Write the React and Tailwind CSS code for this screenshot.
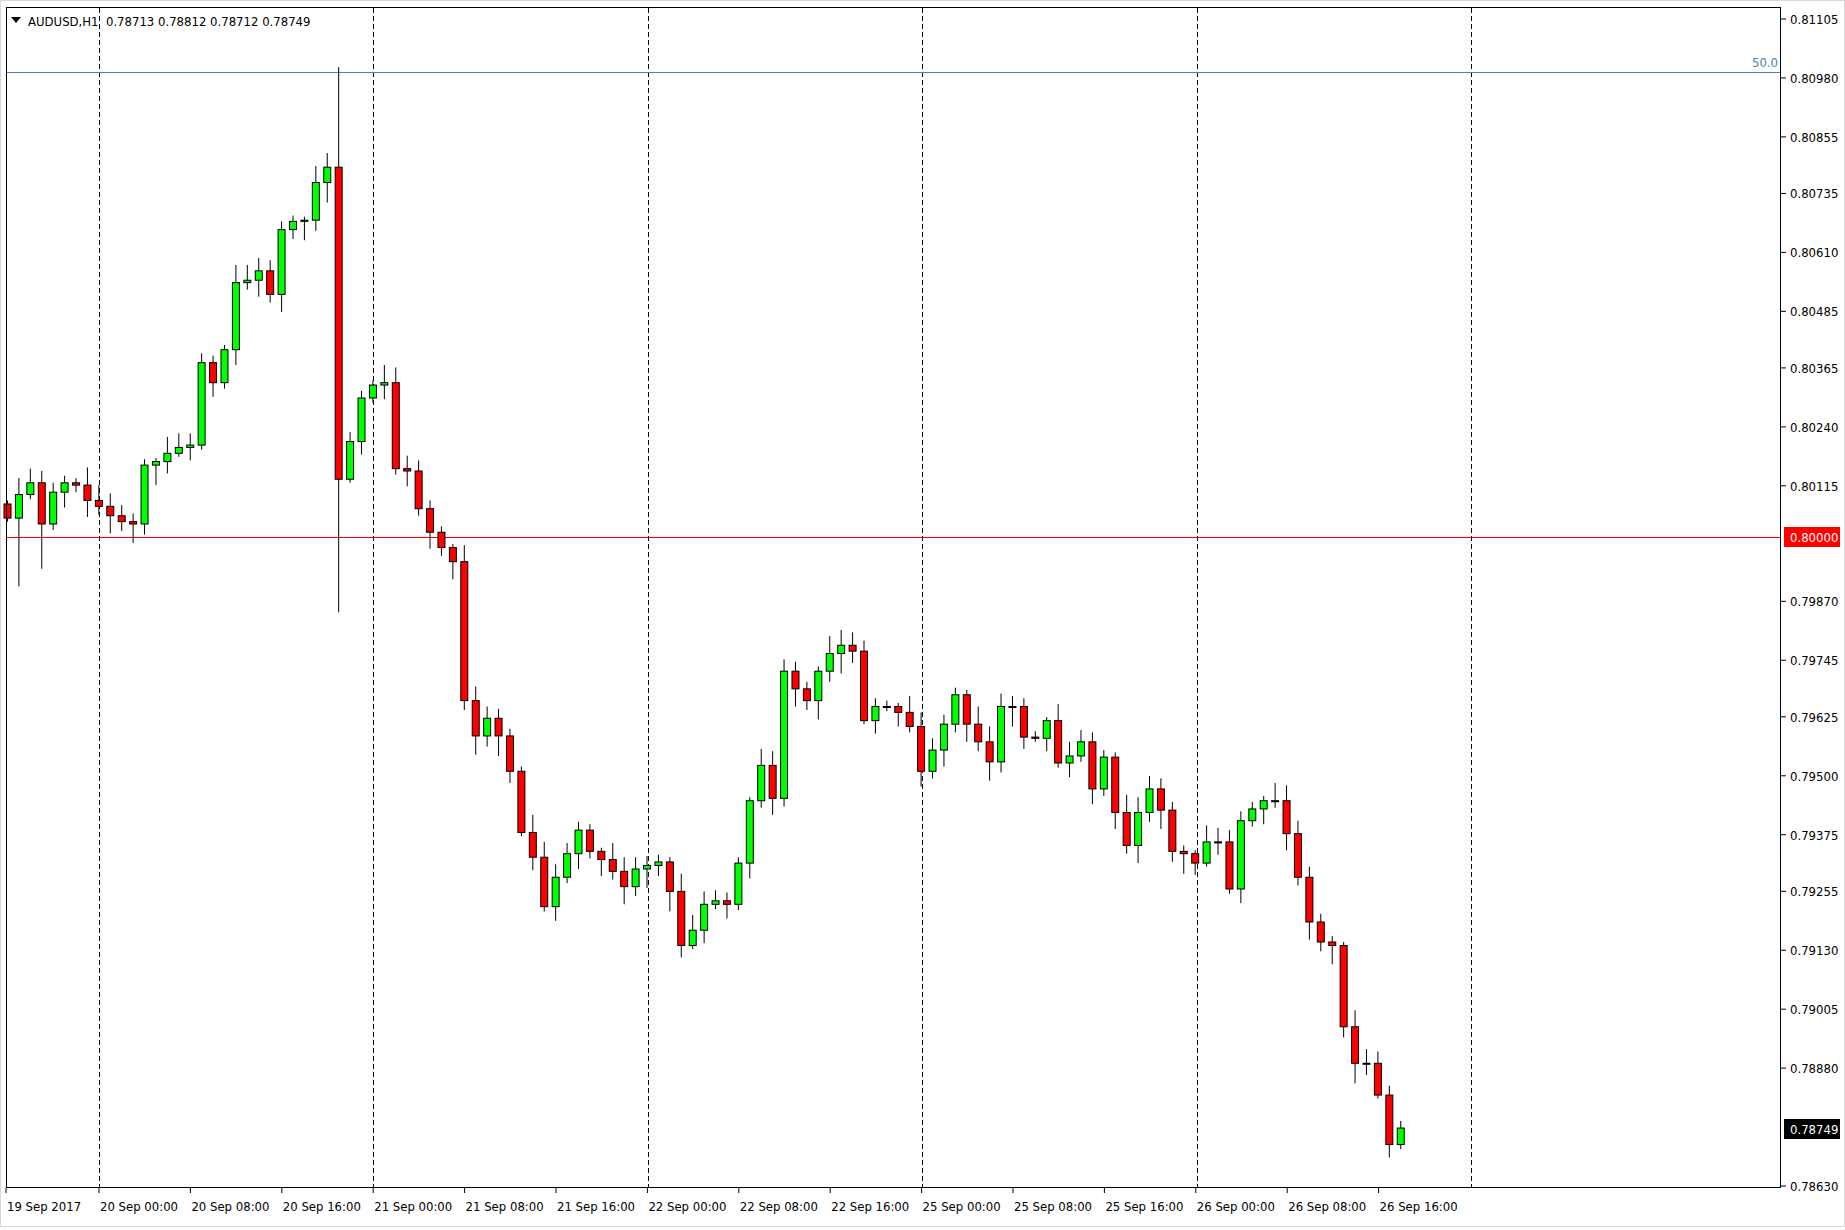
const C=[440,420,410,445,418,410,412,425,430,438,443,445,395,392,385,380,378,308,325,297,240,238,230,250,195,188,187,155,142,407,375,338,327,325,398,400,432,452,465,477,595,625,610,625,655,707,728,770,745,725,705,723,730,740,753,738,735,732,757,803,790,768,765,768,733,680,650,678,570,585,595,570,555,548,553,612,600,600,605,617,655,637,615,590,615,630,647,600,600,626,627,612,648,642,630,670,643,690,718,690,670,688,723,725,733,715,715,755,697,687,680,680,708,745,783,800,803,872,903,903,930,972,958];
const S=1.1775;
const PR=['0.81105','0.80980','0.80855','0.80735','0.80610','0.80485','0.80365','0.80240','0.80115','0.79870','0.79745','0.79625','0.79500','0.79375','0.79255','0.79130','0.79005','0.78880','0.78630'];
const py=p=>19+(0.81105-parseFloat(p))/0.02475*1167;
const TL=['19 Sep 2017','20 Sep 00:00','20 Sep 08:00','20 Sep 16:00','21 Sep 00:00','21 Sep 08:00','21 Sep 16:00','22 Sep 00:00','22 Sep 08:00','22 Sep 16:00','25 Sep 00:00','25 Sep 08:00','25 Sep 16:00','26 Sep 00:00','26 Sep 08:00','26 Sep 16:00'];
export default function App(){
  const candles=C.map((c,i)=>{
    const o=i===0?428:C[i-1];
    let hi=Math.min(o,c)-(3+((i*37)%13));
    let lo=Math.max(o,c)+(3+((i*53)%15));
    if(i===29){hi=57;lo=520;}
    if(i===1){lo=498;}
    if(i===3){lo=483;}
    const x=7.5+11.42*i;
    const up=c<o;
    const top=Math.min(o,c)*S, bot=Math.max(o,c)*S;
    return <g key={i}>
      <line x1={x} x2={x} y1={hi*S} y2={lo*S} stroke="#000" strokeWidth="1"/>
      <rect x={x-3.5} y={top} width="7" height={Math.max(bot-top,1)} fill={up?'#00ff00':'#ff0000'} stroke="#000" strokeWidth="1"/>
    </g>;
  });
  return <div className="w-[1845px] h-[1230px] bg-white overflow-hidden">
    <svg width="1845" height="1230" className="block" fontFamily='"DejaVu Sans Condensed","DejaVu Sans",sans-serif' fontSize="13">
      <rect x="0.5" y="0.5" width="1844" height="1226" fill="#fff" stroke="#d8d8d8"/>
      {[99,373,648,922,1197,1471].map(x=><line key={x} x1={x+0.5} x2={x+0.5} y1="8" y2="1187" stroke="#000" strokeDasharray="5 3"/>)}
      <line x1="6" x2="1781" y1="72.5" y2="72.5" stroke="#4682b4" strokeWidth="1.2"/>
      <text x="1778" y="67" textAnchor="end" fill="#4682b4" fontSize="13">50.0</text>
      <line x1="6" x2="1781" y1="537.5" y2="537.5" stroke="#ff0000" strokeWidth="1.2"/>
      {candles}
      <rect x="6.5" y="7.5" width="1774" height="1180" fill="none" stroke="#000"/>
      <text x="28" y="26" fontSize="13" fill="#000" xmlSpace="preserve">AUDUSD,H1  0.78713 0.78812 0.78712 0.78749</text>
      <polygon points="11,17 21,17 16,23" fill="#000"/>
      {PR.map(p=>{const y=py(p);return <g key={p}><line x1="1781" x2="1786" y1={y} y2={y} stroke="#000"/><text x="1790" y={y+5} fill="#000">{p}</text></g>})}
      <rect x="1784" y="527" width="56" height="20" fill="#ff0000"/>
      <text x="1790" y="542" fill="#fff">0.80000</text>
      <rect x="1784" y="1119" width="56" height="20" fill="#000"/>
      <text x="1790" y="1134" fill="#fff">0.78749</text>
      {TL.map((t,i)=>{const x=i===0?6:99+91.4*(i-1);return <g key={t}><line x1={x} x2={x} y1="1188" y2="1193" stroke="#000"/><text x={x+1} y="1211" fill="#000">{t}</text></g>})}
    </svg>
  </div>;
}
